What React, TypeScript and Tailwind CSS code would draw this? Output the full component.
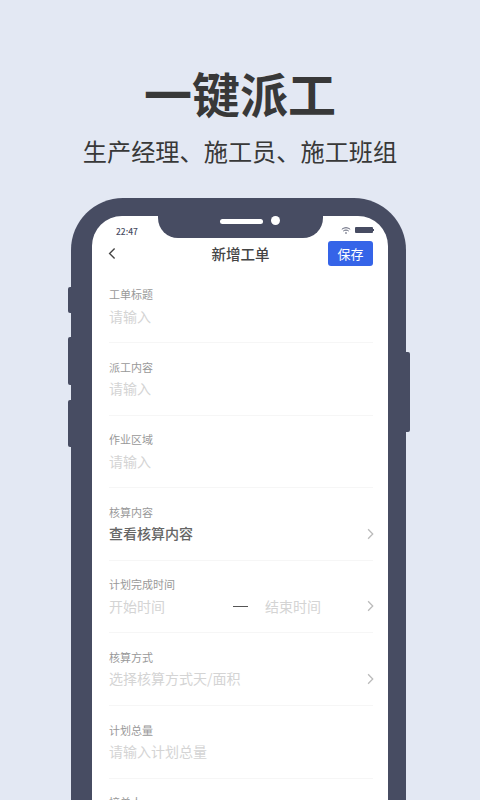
const ROWS = [
  { label: "工单标题", value: "请输入" },
  { label: "派工内容", value: "请输入" },
  { label: "作业区域", value: "请输入" },
  { label: "核算内容", value: "查看核算内容", filled: true, arrow: true },
  { label: "计划完成时间", value: "开始时间", end: "结束时间", arrow: true },
  { label: "核算方式", value: "选择核算方式天/面积", arrow: true },
  { label: "计划总量", value: "请输入计划总量" },
  { label: "接单人", value: "请选择" },
];

function Chevron({ className }: { className: string }) {
  return (
    <svg viewBox="0 0 8 14" fill="none" stroke="currentColor" strokeWidth="1.5" className={className}>
      <path d="M1.2 1.5 6.6 7l-5.4 5.5" />
    </svg>
  );
}

export default function App() {
  return (
    <div className="flex h-[800px] w-[480px] flex-col items-center overflow-hidden bg-[#e3e8f3] font-['Noto_Sans_CJK_SC',sans-serif] text-[#383838]">
      {/* Headline */}
      <div className="mt-[58px] text-[48px] leading-[68px] font-bold">一键派工</div>
      <div className="mt-[9px] text-[24.2px] leading-[32px]">生产经理、施工员、施工班组</div>

      {/* Phone */}
      <div className="relative mt-[31px] ml-[71px] flex h-[700px] w-[335px] shrink-0 flex-col self-start rounded-t-[52px] bg-[#474c62] pt-[18px] pr-[18px] pl-[21px]">
        <div className="absolute top-[89px] left-[-3px] h-[26px] w-[3px] rounded-l-[2px] bg-[#474c62]" />
        <div className="absolute top-[139px] left-[-3px] h-[48px] w-[3px] rounded-l-[2px] bg-[#474c62]" />
        <div className="absolute top-[202px] left-[-3px] h-[47px] w-[3px] rounded-l-[2px] bg-[#474c62]" />
        <div className="absolute top-[154px] right-[-4px] h-[80px] w-[4px] rounded-r-[2px] bg-[#474c62]" />

        {/* Notch */}
        <div className="absolute top-[18px] left-[87px] flex h-[22px] w-[165px] items-start gap-[8px] rounded-b-[20px] bg-[#474c62] pl-[62px]">
          <div className="mt-[3px] h-[4.5px] w-[43px] rounded-full bg-white" />
          <div className="h-[8.5px] w-[8.5px] rounded-full bg-white" />
        </div>

        <div className="flex flex-1 flex-col rounded-t-[30px] bg-white">
          {/* Status bar */}
          <div className="flex h-[25px] items-start justify-between pt-[9.5px] pr-[14px] pl-[24px]">
            <span className="text-[8.5px] leading-[10px] font-medium text-[#474c62]">22:47</span>
            <div className="flex items-center gap-[4px]">
              <svg viewBox="0 0 12 10" fill="none" stroke="#474c62" strokeWidth="1.1" className="h-[9px] w-[10px]">
                <path d="M1 3.6c2.8-2.5 7.2-2.5 10 0M2.8 5.6c1.8-1.5 4.6-1.5 6.4 0" />
                <circle cx="6" cy="8" r="1" fill="#474c62" stroke="none" />
              </svg>
              <div className="flex items-center">
                <div className="h-[6px] w-[18px] rounded-[1px] bg-[#474c62]" />
                <div className="h-[2px] w-[1px] bg-[#474c62]" />
              </div>
            </div>
          </div>

          {/* Nav bar */}
          <div className="grid h-[25px] grid-cols-[1fr_auto_1fr] items-center pr-[15px] pl-[16px]">
            <Chevron className="h-[13px] w-[8px] rotate-180 text-[#444]" />
            <span className="text-[14.5px] font-medium text-[#444]">新增工单</span>
            <button className="h-[25px] w-[45px] justify-self-end rounded-[3px] bg-[#3564e8] text-[13px] text-white">保存</button>
          </div>

          {/* Form */}
          <div className="mt-[4.5px] flex flex-col pr-[15px] pl-[17px]">
            {ROWS.map((row) => (
              <div key={row.label} className="h-[72.6px] shrink-0 border-b border-[#f6f6f6] pt-[15.5px]">
                <div className="text-[11px] leading-[16px] text-[#999]">{row.label}</div>
                <div className="mt-[3.5px] flex h-[21px] items-center text-[14px]">
                  <span className={row.filled ? "font-medium text-[#666]" : "text-[#d4d4d4]"}>{row.value}</span>
                  {row.end && (
                    <>
                      <div className="ml-[68px] h-px w-[15px] bg-[#555]" />
                      <span className="ml-[17px] text-[#d4d4d4]">{row.end}</span>
                    </>
                  )}
                  {row.arrow && <Chevron className="mr-[-1px] ml-auto h-[12px] w-[7px] text-[#bbb]" />}
                </div>
              </div>
            ))}
          </div>
        </div>
      </div>
    </div>
  );
}
